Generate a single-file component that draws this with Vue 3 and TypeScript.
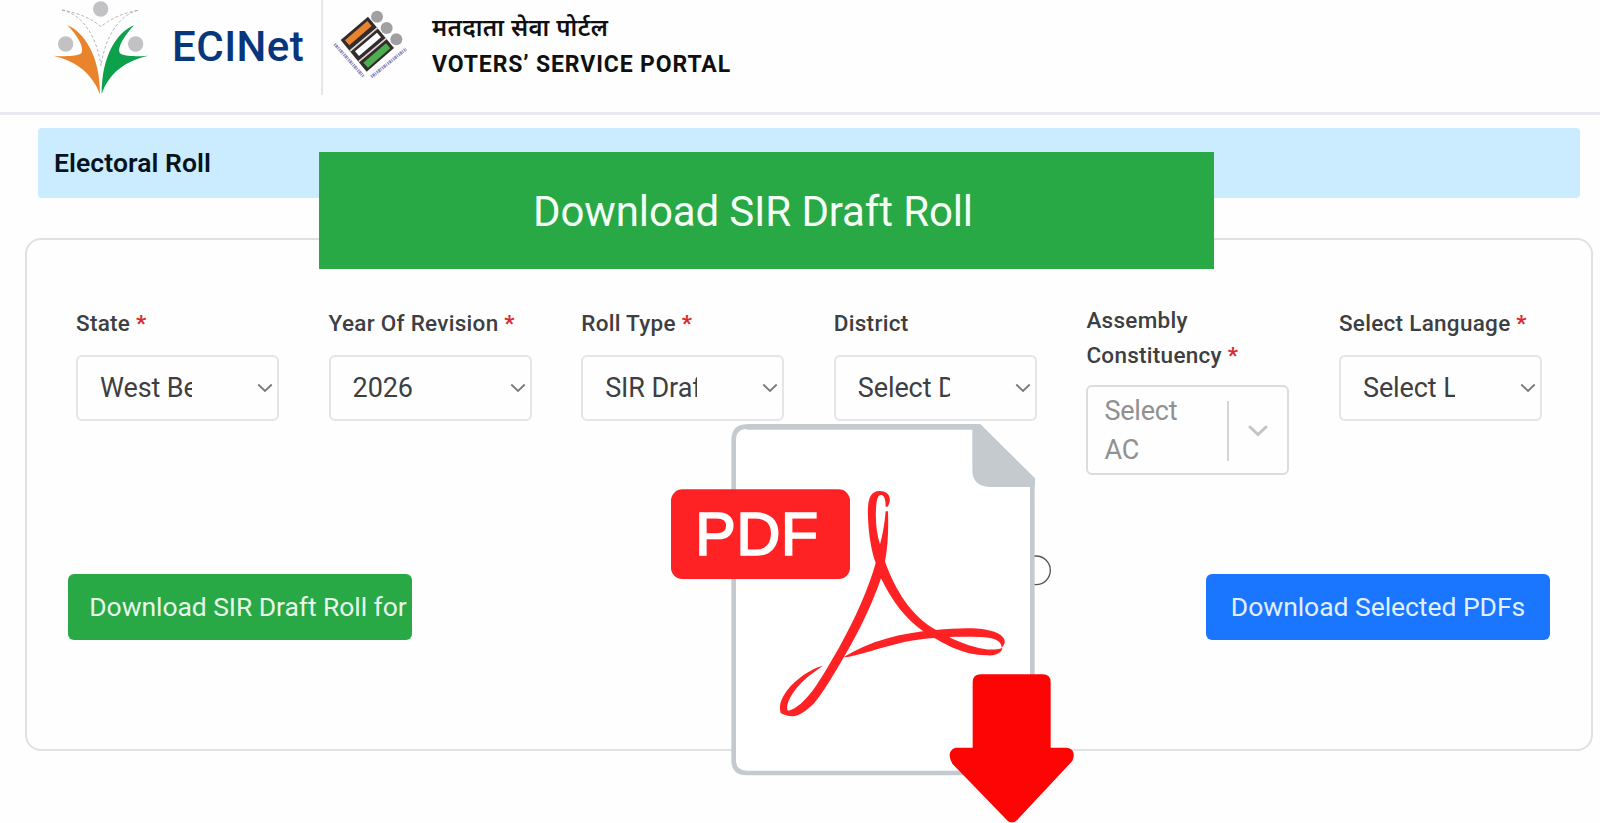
<script setup lang="ts">
interface Field {
  label: string
  required: boolean
  value: string
  multi?: boolean
}

const fields: Field[] = [
  { label: 'State', required: true, value: 'West Bengal' },
  { label: 'Year Of Revision', required: true, value: '2026' },
  { label: 'Roll Type', required: true, value: 'SIR Draft Roll' },
  { label: 'District', required: false, value: 'Select District' },
  { label: 'Assembly Constituency', required: true, value: 'Select AC', multi: true },
  { label: 'Select Language', required: true, value: 'Select Language' },
]
</script>

<template>
  <div class="page">
    <header class="header">
      <svg class="eci-logo" viewBox="0 0 360 300" aria-hidden="true">
        <g fill="#c2c2c4">
          <circle cx="182" cy="27" r="23" />
          <circle cx="77" cy="132" r="23" />
          <circle cx="287" cy="132" r="23" />
        </g>
        <path fill="#e9842c" d="M82 76C132 96 181 170 180 283C158 224 113 184 40 167C77 170 112 169 124 160C134 143 112 106 82 76Z" />
        <path fill="#0da14c" d="M282 76C232 96 185 165 185 283C204 224 251 184 324 167C285 170 250 169 240 160C230 143 255 106 282 76Z" />
        <g fill="none" stroke="#aaa" stroke-width="2.5" stroke-dasharray="9 6">
          <path d="M66 30C125 43 170 105 183 198C196 105 240 43 298 30" />
          <path d="M66 30C112 38 154 55 183 80C212 55 252 38 298 30" />
        </g>
      </svg>
      <span class="brand">ECINet</span>
      <span class="divider"></span>
      <svg class="vsp-logo" viewBox="0 0 300 270" aria-hidden="true">
        <g fill="#a0a0a2">
          <circle cx="171" cy="50" r="18" />
          <circle cx="200" cy="84" r="18" />
          <circle cx="229" cy="118" r="18" />
        </g>
        <path fill="#332c2c" d="M62 120L144 50L222 144L140 215Z" />
        <g stroke="#ddd5d2" stroke-width="5">
          <path d="M90 153L173 83M116 185L199 115" />
        </g>
        <path fill="#e9842c" d="M75 121L142 63L155 78L88 136Z" />
        <path fill="#fff" d="M105 154L171 98L183 112L117 168Z" />
        <path fill="#4cae50" d="M130 188L198 130L211 145L144 203Z" />
        <g fill="none" stroke="#716bad" stroke-width="10" stroke-dasharray="4 2 7 2 3 3" opacity=".75">
          <path d="M44 132L130 229" />
          <path d="M154 231L258 147" />
        </g>
      </svg>
      <div class="portal">
        <span class="hindi">मतदाता सेवा पोर्टल</span>
        <span class="english">VOTERS’ SERVICE PORTAL</span>
      </div>
    </header>

    <main>
      <h1 class="banner"><span>Electoral Roll</span></h1>

      <section class="card">
        <div class="fields">
          <div v-for="f in fields" :key="f.label" class="field" :class="{ multi: f.multi }">
            <label>{{ f.label }}<span v-if="f.required" class="req"> *</span></label>
            <div v-if="f.multi" class="combo">
              <span class="placeholder">{{ f.value }}</span>
              <span class="sep"></span>
              <svg viewBox="0 0 20 12"><path d="M2 2L10 9.5L18 2" /></svg>
            </div>
            <div v-else class="select">
              <span class="value">{{ f.value }}</span>
              <svg viewBox="0 0 16 10"><path d="M1.3 1.5L8 8L14.7 1.5" /></svg>
            </div>
          </div>
        </div>
        <div class="actions">
          <button class="btn green" type="button"><span>Download SIR Draft Roll for</span></button>
          <button class="btn blue" type="button"><span>Download Selected PDFs</span></button>
        </div>
      </section>
    </main>

    <div class="ribbon"><span>Download SIR Draft Roll</span></div>

    <svg class="pdf" viewBox="0 0 1320 1239" aria-hidden="true">
      <circle cx="1188" cy="481" r="43" fill="#fff" stroke="#555" stroke-width="4" />
      <path fill="#fff" stroke="#c5cacf" stroke-width="14" d="M320 50H1018L1177 208V1089H320Q281 1089 281 1050V92Q281 50 320 50Z" />
      <path fill="#c5cacf" d="M320 42H1020L1185 205V231H1048Q997 228 997 180V59H320Z" />
      <rect x="93" y="238" width="537" height="269" rx="34" fill="#fe2224" />
      <text x="165" y="435" textLength="370" lengthAdjust="spacing">PDF</text>
      <g fill="#fe2224">
        <path fill-rule="evenodd" d="M743 290C760 262 742 243 719 243C686 243 682 278 684 323C686 373 694 422 707 459C687 532 646 625 597 713C565 768 535 822 507 855C484 883 461 900 443 902C436 885 452 854 476 827C499 802 522 786 548 768C512 775 460 814 438 846C420 871 417 892 422 909C431 914 444 919 457 919C478 917 499 902 521 881C550 847 580 796 610 744C659 663 700 574 723 505C756 573 795 625 850 664C909 700 965 736 1041 736C1072 738 1085 726 1087 714C1062 722 1032 719 1003 710C958 698 921 679 882 656C814 616 768 545 735 455C744 405 746 355 744 304L737 304C734 341 728 374 720 403C709 370 705 325 709 284C711 262 716 253 725 255C735 258 737 274 737 290Z" />
        <path d="M610 742C686 694 783 668 887 660C969 652 1046 650 1082 675C1101 691 1095 703 1085 713C1085 690 1056 682 1022 681C943 678 878 681 823 691C751 702 682 730 624 741Z" />
      </g>
      <path fill="#fe0505" d="M1023 793H1208Q1232 793 1232 817V1013H1280Q1311 1018 1297 1053L1137 1224Q1117 1250 1097 1226L937 1061Q917 1025 946 1013H998V817Q998 793 1023 793Z" />
    </svg>
  </div>
</template>

<style>
body {
  margin: 0;
  background: #fefefe;
}
</style>

<style scoped>
.page {
  position: relative;
  width: 1600px;
  height: 823px;
  overflow: hidden;
  background: #fefefe;
  font-family: Roboto, "Noto Sans", sans-serif;
  color: #3d3f42;
}
.header {
  box-sizing: border-box;
  height: 115px;
  display: flex;
  align-items: flex-start;
  border-bottom: 3px solid #e8e9ee;
  padding-left: 40px;
}
.eci-logo {
  width: 120px;
  height: 100px;
  flex: none;
}
.brand {
  width: 148px;
  margin: 22px 0 0 12px;
  font-size: 42px;
  line-height: 50px;
  font-weight: 500;
  color: #07367c;
  letter-spacing: 0.5px;
  white-space: nowrap;
}
.divider {
  width: 2px;
  height: 95px;
  margin-left: 1px;
  background: #e6e6ea;
}
.vsp-logo {
  width: 100px;
  height: 90px;
  margin-left: -3px;
  flex: none;
}
.portal {
  display: flex;
  flex-direction: column;
  margin: 10px 0 0 12px;
  color: #101010;
  font-weight: 700;
  white-space: nowrap;
}
.hindi {
  font-size: 24px;
  line-height: 36px;
  font-weight: 600;
  letter-spacing: 0.45px;
}
.english {
  font-size: 23px;
  line-height: 38px;
  letter-spacing: 0.87px;
}
.banner {
  box-sizing: border-box;
  height: 70px;
  margin: 13px 20px 0 38px;
  padding-left: 16px;
  background: #cbebff;
  border-radius: 4px;
  font-size: 26.5px;
  line-height: 70px;
  font-weight: 600;
  letter-spacing: 0.08px;
  color: #07131d;
}
.card {
  box-sizing: border-box;
  width: 1568px;
  height: 513px;
  margin: 40px 0 0 25px;
  border: 2px solid #e0e1e3;
  border-radius: 16px;
  padding: 65px 49px 0 49px;
}
.fields {
  height: 269px;
  display: grid;
  grid-template-columns: repeat(6, 203px);
  column-gap: 49.6px;
  align-items: start;
}
.field {
  display: flex;
  flex-direction: column;
}
label {
  height: 35px;
  margin: 1px 0 14px;
  font-size: 22.5px;
  line-height: 35px;
  font-weight: 500;
  letter-spacing: 0.28px;
}
.multi label {
  height: 70px;
  margin: -2px 0 12px;
}
.req {
  color: #e0282c;
  font-weight: 700;
}
.select {
  box-sizing: border-box;
  height: 66px;
  display: flex;
  align-items: center;
  justify-content: space-between;
  border: 2px solid #e3e5e9;
  border-radius: 6px;
  padding: 0 4px 0 22px;
}
.value {
  width: 92px;
  overflow: hidden;
  white-space: nowrap;
  font-size: 27px;
  line-height: 36px;
  letter-spacing: -0.1px;
}
.select svg {
  width: 16px;
  height: 10px;
  fill: none;
  stroke: #77797c;
  stroke-width: 1.8;
}
.combo {
  box-sizing: border-box;
  height: 90px;
  display: flex;
  align-items: center;
  border: 2px solid #dcdcde;
  border-radius: 6px;
  padding: 1px 0 0 16px;
}
.placeholder {
  width: 123px;
  padding-right: 30px;
  box-sizing: border-box;
  font-size: 27px;
  line-height: 39px;
  letter-spacing: -0.2px;
  color: #909193;
}
.sep {
  width: 2px;
  height: 60px;
  background: #d5d5d7;
}
.combo svg {
  width: 20px;
  height: 12px;
  margin-left: 19px;
  fill: none;
  stroke: #c4c4c6;
  stroke-width: 3;
  stroke-linecap: round;
}
.actions {
  display: flex;
  justify-content: space-between;
  margin: 0 -8px;
}
.btn {
  width: 344px;
  height: 66px;
  border: 0;
  border-radius: 6px;
  padding: 0;
  font: 400 26.5px/66px Roboto, sans-serif;
  color: #e6f8ea;
  white-space: nowrap;
}
.green {
  background: #29a846;
  padding-left: 16px;
  letter-spacing: -0.07px;
}
.blue {
  background: #1a76ff;
  color: #e0f0ff;
  letter-spacing: -0.05px;
}
.ribbon {
  position: absolute;
  left: 319px;
  top: 152px;
  width: 895px;
  height: 117px;
  box-sizing: border-box;
  padding-right: 27px;
  background: #29a846;
  color: #f4fff6;
  font-size: 42px;
  line-height: 119px;
  letter-spacing: -0.13px;
  text-align: center;
  white-space: nowrap;
}
.pdf {
  position: absolute;
  left: 640px;
  top: 410px;
  width: 440px;
  height: 413px;
}
.pdf text {
  font-family: "Liberation Sans", Arial, sans-serif;
  font-size: 184px;
  fill: #fff;
  stroke: #fff;
  stroke-width: 5px;
}
</style>
